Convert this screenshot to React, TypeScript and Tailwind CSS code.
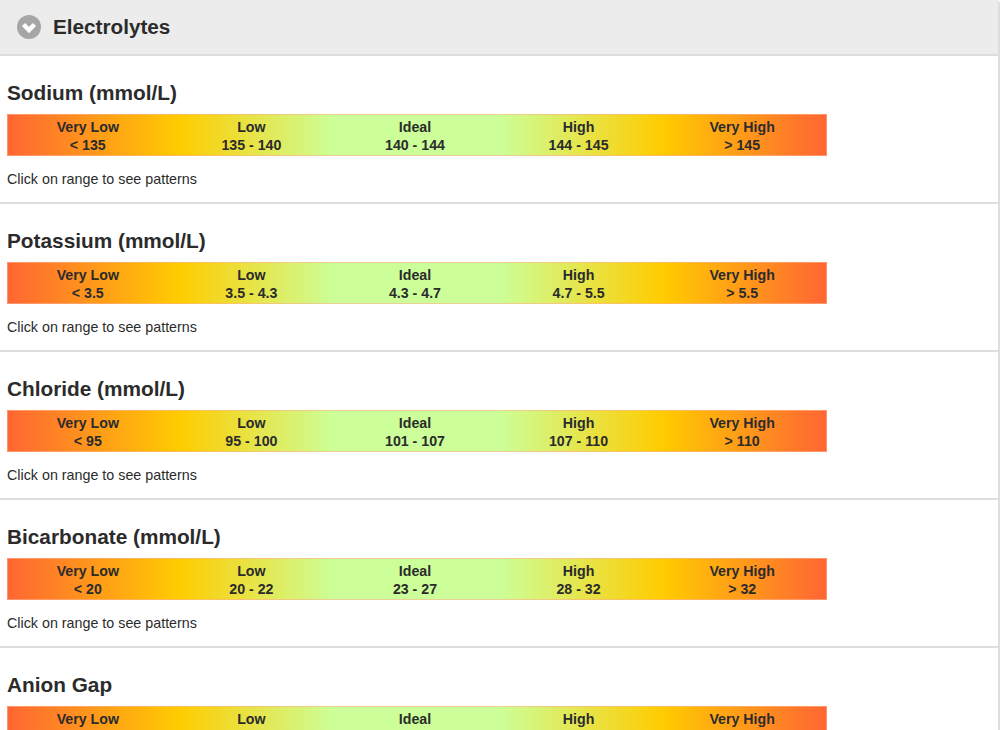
const ranges = [
  {
    name: "Sodium (mmol/L)",
    values: ["< 135", "135 - 140", "140 - 144", "144 - 145", "> 145"],
  },
  {
    name: "Potassium (mmol/L)",
    values: ["< 3.5", "3.5 - 4.3", "4.3 - 4.7", "4.7 - 5.5", "> 5.5"],
  },
  {
    name: "Chloride (mmol/L)",
    values: ["< 95", "95 - 100", "101 - 107", "107 - 110", "> 110"],
  },
  {
    name: "Bicarbonate (mmol/L)",
    values: ["< 20", "20 - 22", "23 - 27", "28 - 32", "> 32"],
  },
  {
    name: "Anion Gap",
    values: ["< 8", "8 - 10", "10 - 12", "12 - 14", "> 14"],
  },
];

const labels = ["Very Low", "Low", "Ideal", "High", "Very High"];

const App = () => {
  return (
    <div className="h-[730px] w-[1000px] overflow-hidden rounded-tr-sm border-r-2 border-[#dddddd] bg-white font-['Liberation_Sans',Arial,sans-serif] text-[#2b2b2b]">
      <div className="flex h-[56px] items-center gap-[12px] border-b-2 border-[#dcdcdc] bg-[#ececec] pl-[17px]">
        <svg width="24" height="24" viewBox="0 0 24 24">
          <circle cx="12" cy="12" r="12" fill="#a6a6a6" />
          <path
            d="M6.5 9.5 L12 15 L17.5 9.5"
            fill="none"
            stroke="#ffffff"
            strokeWidth="4.5"
          />
        </svg>
        <h1 className="text-[20.7px] font-bold">Electrolytes</h1>
      </div>

      {ranges.map((r) => (
        <div
          key={r.name}
          className="h-[148px] border-b-2 border-[#dedede] px-[7px] pt-[24px]"
        >
          <h2 className="mb-[8px] text-[20.8px] leading-[26px] font-bold">
            {r.name}
          </h2>
          <div className="flex h-[42px] w-[820px] border border-[#ffb38f]/60 bg-[linear-gradient(to_right,#ff6633_0%,#ffcc00_21%,#ccff99_40%,#ccff99_60%,#ffcc00_80%,#ff6633_100%)]">
            {labels.map((label, i) => (
              <div
                key={label}
                className="flex-1 pr-[4px] pt-[3px] text-center text-[14.2px] leading-[18px] font-bold"
              >
                <div>{label}</div>
                <div>{r.values[i]}</div>
              </div>
            ))}
          </div>
          <p className="mt-[14px] text-[14.3px] leading-[18px]">
            Click on range to see patterns
          </p>
        </div>
      ))}
    </div>
  );
};

export default App;
